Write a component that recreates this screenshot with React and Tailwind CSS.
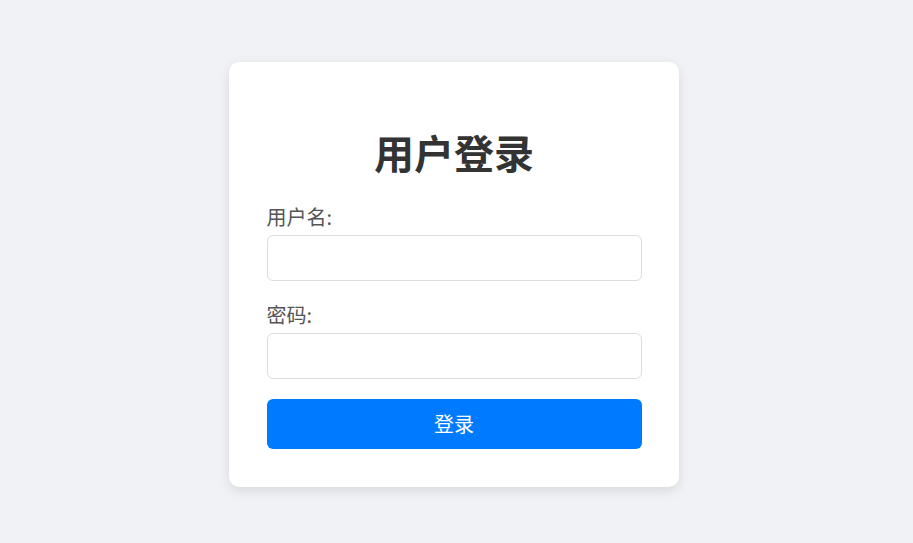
import React, { useState } from "react";

const FONT = { fontFamily: '"Microsoft YaHei", "Noto Sans CJK SC", "Liberation Sans", sans-serif' };

const Field = ({ label, type, value, onChange }) => (
  <div className="mb-[20px]">
    <label className="block text-[20px] leading-[27px] text-[#555] mb-[5px]">{label}</label>
    <input
      type={type}
      value={value}
      onChange={(e) => onChange(e.target.value)}
      className="block w-full h-[46px] px-3 border border-[#ddd] rounded-[6px] bg-white text-[16px] outline-none"
    />
  </div>
);

export default function App() {
  const [username, setUsername] = useState("");
  const [password, setPassword] = useState("");

  return (
    <div
      className="min-h-screen bg-[#f0f2f5] flex items-center justify-center pt-[6px] pr-[6px]"
      style={FONT}
    >
      <div className="w-[450px] bg-white rounded-[10px] shadow-[0_4px_12px_rgba(0,0,0,0.1)] pl-[38px] pr-[37px] pt-[38px] pb-[38px]">
        <h1 className="mt-[30px] mb-[29px] text-center text-[40px] leading-[44px] font-bold text-[#333]">
          用户登录
        </h1>
        <Field label="用户名:" type="text" value={username} onChange={setUsername} />
        <Field label="密码:" type="password" value={password} onChange={setPassword} />
        <button className="block w-full h-[50px] rounded-[6px] bg-[#007bff] text-white text-[20px]">
          登录
        </button>
      </div>
    </div>
  );
}
